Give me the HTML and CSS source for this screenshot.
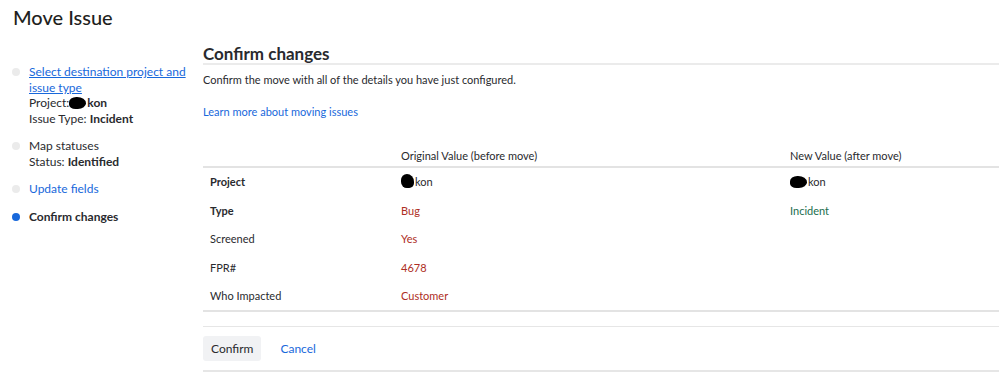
FILE: index.html
```html
<!doctype html>
<html>
<head>
	<meta charset="UTF-8" />
	<title>Move Issue</title>
	<link rel="stylesheet" href="styles.css">
</head>
<body>
	<h1 class="pageTitle">Move Issue</h1>

	<div class="layout">
		<ul class="steps">
			<li class="step">
				<span class="dot"></span>
				<div class="stepBody">
					<a class="stepLink underline" href="#">Select destination project and issue type</a>
					<div>Project:<span class="blot"></span><b>kon</b></div>
					<div>Issue Type: <b>Incident</b></div>
				</div>
			</li>
			<li class="step">
				<span class="dot"></span>
				<div class="stepBody">
					<div>Map statuses</div>
					<div>Status: <b>Identified</b></div>
				</div>
			</li>
			<li class="step">
				<span class="dot"></span>
				<div class="stepBody">
					<a class="stepLink" href="#">Update fields</a>
				</div>
			</li>
			<li class="step current">
				<span class="dot"></span>
				<div class="stepBody">
					<b>Confirm changes</b>
				</div>
			</li>
		</ul>

		<div class="main">
			<h2 class="sectionTitle">Confirm changes</h2>
			<p class="intro">Confirm the move with all of the details you have just configured.</p>
			<p class="learn"><a href="#">Learn more about moving issues</a></p>

			<table class="changes">
				<thead>
					<tr>
						<th class="colField"></th>
						<th class="colOld">Original Value (before move)</th>
						<th>New Value (after move)</th>
					</tr>
				</thead>
				<tbody>
					<tr>
						<td class="fieldName strong">Project</td>
						<td><span class="blot small"></span>kon</td>
						<td><span class="blot"></span>kon</td>
					</tr>
					<tr>
						<td class="fieldName strong">Type</td>
						<td class="oldVal">Bug</td>
						<td class="newVal">Incident</td>
					</tr>
					<tr>
						<td class="fieldName">Screened</td>
						<td class="oldVal">Yes</td>
						<td></td>
					</tr>
					<tr>
						<td class="fieldName">FPR#</td>
						<td class="oldVal">4678</td>
						<td></td>
					</tr>
					<tr>
						<td class="fieldName">Who Impacted</td>
						<td class="oldVal">Customer</td>
						<td></td>
					</tr>
				</tbody>
			</table>

			<div class="actions">
				<button class="btn" type="button">Confirm</button>
				<a class="cancel" href="#">Cancel</a>
			</div>
		</div>
	</div>
</body>
</html>
```

FILE: styles.css
```css
body {
	margin: 0;
	font-family: Lato, "Open Sans", sans-serif;
	font-size: 12px;
	color: #292a2e;
	background: #fff;
	overflow: hidden;
}
a {
	color: #1868db;
	text-decoration: none;
}
.pageTitle {
	margin: 0;
	padding: 5px 0 0 13px;
	font-size: 20px;
	font-weight: 500;
	line-height: 24px;
	color: #1f1f21;
}
.layout {
	display: flex;
	padding-top: 13px;
}
.steps {
	list-style: none;
	margin: 0;
	padding: 22px 0 0 12px;
	width: 191px;
	flex: none;
}
.step {
	display: flex;
	align-items: flex-start;
	font-size: 12px;
	line-height: 15.5px;
	margin-bottom: 12px;
}
.dot {
	width: 8px;
	height: 8px;
	border-radius: 50%;
	background: #ebebeb;
	margin: 4px 9px 0 0;
	flex: none;
}
.current .dot {
	background: #1868db;
}
.stepLink {
	display: block;
}
.underline {
	text-decoration: underline;
}
.blot {
	display: inline-block;
	width: 17px;
	height: 12px;
	background: #000;
	border-radius: 45% 55% 50% 40%;
	vertical-align: -2px;
	margin-right: 1px;
}
.blot.small {
	width: 13px;
	height: 14px;
	border-radius: 50% 60% 40% 50%;
}
.main {
	flex: 1;
	min-width: 0;
	padding-top: 3px;
}
.sectionTitle {
	margin: 0;
	font-size: 17px;
	font-weight: bold;
	line-height: 18px;
	padding-bottom: 0;
	border-bottom: 2px solid #ebebeb;
}
.intro {
	margin: 7px 0 0 0;
	font-size: 11px;
	line-height: 16px;
}
.learn {
	margin: 16px 0 0 0;
	font-size: 11px;
	line-height: 16px;
}
.changes {
	width: 100%;
	margin-top: 23px;
	border-collapse: collapse;
	font-size: 11px;
}
.changes th {
	text-align: left;
	font-weight: normal;
	padding: 5px 7px 2px 7px;
	line-height: 16px;
	border-bottom: 2px solid #e3e3e3;
}
.colField {
	width: 177px;
}
.colOld {
	width: 375px;
}
.changes td {
	padding: 6px 7px;
	line-height: 16.5px;
}
.changes tbody tr:last-child td {
	padding-bottom: 5px;
	border-bottom: 2px solid #e3e3e3;
}
.strong {
	font-weight: bold;
}
.oldVal {
	color: #ae2e24;
}
.newVal {
	color: #216e4e;
}
.actions {
	margin-top: 14px;
	border-top: 1px solid #e6e6e6;
	border-bottom: 2px solid #e6e6e6;
	padding: 9px 0 9px 0;
	display: flex;
	align-items: center;
}
.btn {
	font-family: inherit;
	font-size: 12px;
	color: #292a2e;
	background: #f1f2f4;
	border: none;
	border-radius: 3px;
	height: 25px;
	padding: 0 8px;
}
.cancel {
	font-size: 12px;
	margin-left: 19px;
}
```
